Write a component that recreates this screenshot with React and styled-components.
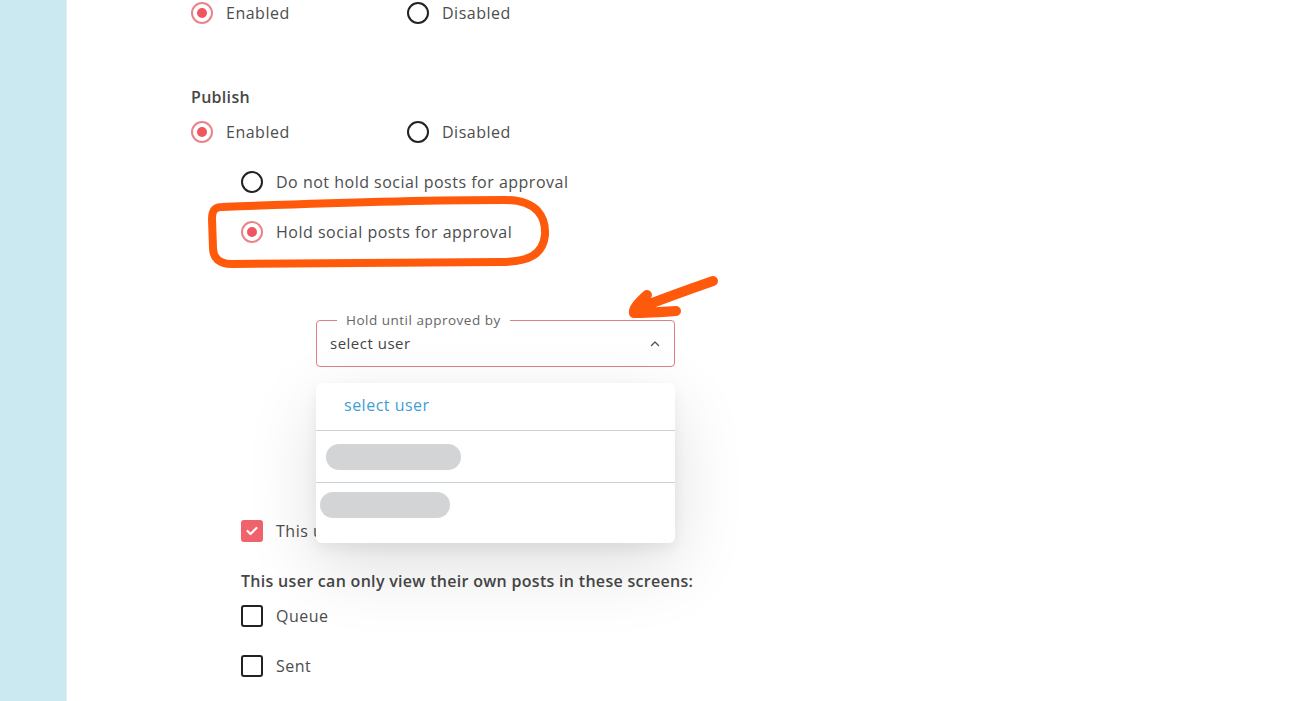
import React from "react";
import styled, { createGlobalStyle } from "styled-components";

const GlobalStyle = createGlobalStyle`
    html, body {
        margin: 0;
        padding: 0;
        background: #ffffff;
        font-family: "Open Sans", "Liberation Sans", sans-serif;
        letter-spacing: 0.5px;
        color: #4a4a4a;
    }
`;

const Page = styled.div`
    display: flex;
    min-height: 701px;
    position: relative;
    overflow: hidden;
`;

const Sidebar = styled.aside`
    width: 66px;
    flex-shrink: 0;
    background-color: #cbe9f1;
    border-right: 1px solid #e3eef3;
`;

const Main = styled.main`
    flex: 1;
    padding: 2px 0 0 124px;
`;

const OptionRow = styled.div`
    display: flex;
    margin-top: ${(p) => p.$top || 0}px;
    padding-left: ${(p) => p.$indent || 0}px;
`;

const Option = styled.label`
    display: flex;
    align-items: center;
    gap: 13px;
    width: ${(p) => (p.$wide ? "auto" : "216px")};
    height: 22px;
    font-size: 16px;
    color: #4d4d4d;
    white-space: nowrap;
`;

const Radio = styled.span`
    box-sizing: border-box;
    width: 22px;
    height: 22px;
    border-radius: 50%;
    border: 2px solid ${(p) => (p.$on ? "#e9858a" : "#222222")};
    display: flex;
    align-items: center;
    justify-content: center;
    flex-shrink: 0;

    &::after {
        content: "";
        display: ${(p) => (p.$on ? "block" : "none")};
        width: 10px;
        height: 10px;
        border-radius: 50%;
        background: #f0565f;
    }
`;

const SectionTitle = styled.div`
    margin-top: ${(p) => p.$top || 0}px;
    padding-left: ${(p) => p.$indent || 0}px;
    font-size: 16px;
    line-height: 22px;
    font-weight: 600;
    letter-spacing: 0.3px;
    color: #474747;
`;

const SubOptions = styled.div`
    display: flex;
    flex-direction: column;
    gap: 28px;
    margin-top: 28px;
    padding-left: 50px;
`;

const SelectWrap = styled.div`
    position: relative;
    margin: 70px 0 0 125px;
    width: 359px;
`;

const Field = styled.fieldset`
    box-sizing: border-box;
    margin: 0;
    height: 54px;
    border: 1px solid #e27d84;
    border-radius: 4px;
    padding: 0 14px 0 13px;
    display: flex;
    align-items: center;
    justify-content: space-between;
`;

const Legend = styled.legend`
    margin-left: 7px;
    padding: 0 9px 0 9px;
    font-size: 13.5px;
    line-height: 14px;
    color: #666666;
`;

const SelectValue = styled.span`
    font-size: 15px;
    color: #444444;
    margin-top: -8px;
`;

const Chevron = styled.svg`
    width: 10px;
    height: 10px;
    margin-top: -6px;
`;

const Menu = styled.div`
    position: absolute;
    left: 0;
    right: 0;
    top: calc(100% + 16px);
    background: #ffffff;
    border-radius: 6px;
    box-shadow: 0 24px 70px rgba(0, 0, 0, 0.13), 0 6px 14px rgba(0, 0, 0, 0.06);
    z-index: 2;
`;

const MenuItem = styled.div`
    box-sizing: border-box;
    height: ${(p) => p.$h}px;
    display: flex;
    align-items: center;
    padding-left: ${(p) => p.$pad}px;
    padding-bottom: ${(p) => (p.$first ? 4 : 0)}px;
    border-top: ${(p) => (p.$first ? "none" : "1px solid #c9d1d9")};
    font-size: 16px;
    color: #3f9fd3;
`;

const Skeleton = styled.div`
    width: ${(p) => p.$w}px;
    height: 26px;
    border-radius: 13px;
    background: #d3d4d6;
    margin-top: ${(p) => p.$shift || 0}px;
`;

const CheckRow = styled.label`
    display: flex;
    align-items: center;
    gap: 13px;
    height: 22px;
    margin-top: ${(p) => p.$top || 0}px;
    padding-left: 50px;
    font-size: 16px;
    color: #4d4d4d;
    white-space: nowrap;
`;

const Box = styled.span`
    box-sizing: border-box;
    width: 22px;
    height: 22px;
    border-radius: 3px;
    flex-shrink: 0;
    display: flex;
    align-items: center;
    justify-content: center;
    background: ${(p) => (p.$on ? "#f0636b" : "transparent")};
    border: ${(p) => (p.$on ? "none" : "2px solid #222222")};
`;

const Annotation = styled.svg`
    position: absolute;
    left: 0;
    top: 0;
    width: 1312px;
    height: 701px;
    pointer-events: none;
    z-index: 3;
`;

const RadioPair = ({ value }) => (
    <>
        <Option>
            <Radio $on={value} />
            Enabled
        </Option>
        <Option>
            <Radio $on={!value} />
            Disabled
        </Option>
    </>
);

const App = () => {
    return (
        <Page>
            <GlobalStyle />
            <Sidebar />
            <Main>
                <OptionRow>
                    <RadioPair value={true} />
                </OptionRow>

                <SectionTitle $top={62}>Publish</SectionTitle>
                <OptionRow $top={13}>
                    <RadioPair value={true} />
                </OptionRow>

                <SubOptions>
                    <Option $wide>
                        <Radio />
                        Do not hold social posts for approval
                    </Option>
                    <Option $wide>
                        <Radio $on />
                        Hold social posts for approval
                    </Option>
                </SubOptions>

                <SelectWrap>
                    <Field>
                        <Legend>Hold until approved by</Legend>
                        <SelectValue>select user</SelectValue>
                        <Chevron viewBox="0 0 10 10">
                            <path d="M1.5 6.5 L5 3 L8.5 6.5" fill="none" stroke="#555" strokeWidth="1.4" strokeLinecap="round" strokeLinejoin="round" />
                        </Chevron>
                    </Field>
                    <Menu>
                        <MenuItem $first $h={47} $pad={28}>select user</MenuItem>
                        <MenuItem $h={52} $pad={10}>
                            <Skeleton $w={135} $shift={0} />
                        </MenuItem>
                        <MenuItem $h={61} $pad={4}>
                            <Skeleton $w={130} $shift={-16} />
                        </MenuItem>
                    </Menu>
                </SelectWrap>

                <CheckRow $top={153}>
                    <Box $on>
                        <svg width="12" height="10" viewBox="0 0 12 10">
                            <path d="M1.5 5 L4.5 8 L10.5 2" fill="none" stroke="#fff" strokeWidth="2.2" strokeLinecap="round" strokeLinejoin="round" />
                        </svg>
                    </Box>
                    This user's posts always need approval
                </CheckRow>

                <SectionTitle $top={28} $indent={50}>
                    This user can only view their own posts in these screens:
                </SectionTitle>

                <CheckRow $top={13}>
                    <Box />
                    Queue
                </CheckRow>
                <CheckRow $top={28}>
                    <Box />
                    Sent
                </CheckRow>
            </Main>

            <Annotation viewBox="0 0 1312 701">
                <path
                    d="M222 207 C300 204 420 200 505 200 C538 200 546 218 545 235 C543 254 530 262 500 262 L232 264 C219 264 213 258 213 248 L212 219 C212 210 215 207 222 207 Z"
                    fill="none"
                    stroke="#ff5a0c"
                    strokeWidth="8"
                    strokeLinejoin="round"
                />
                <path
                    d="M713 281 C690 289 665 298 642 307 M647 295 C638 303 633 309 634 313 C648 313 662 312 676 311"
                    fill="none"
                    stroke="#ff5a0c"
                    strokeWidth="10"
                    strokeLinecap="round"
                    strokeLinejoin="round"
                />
            </Annotation>
        </Page>
    );
};

export default App;
